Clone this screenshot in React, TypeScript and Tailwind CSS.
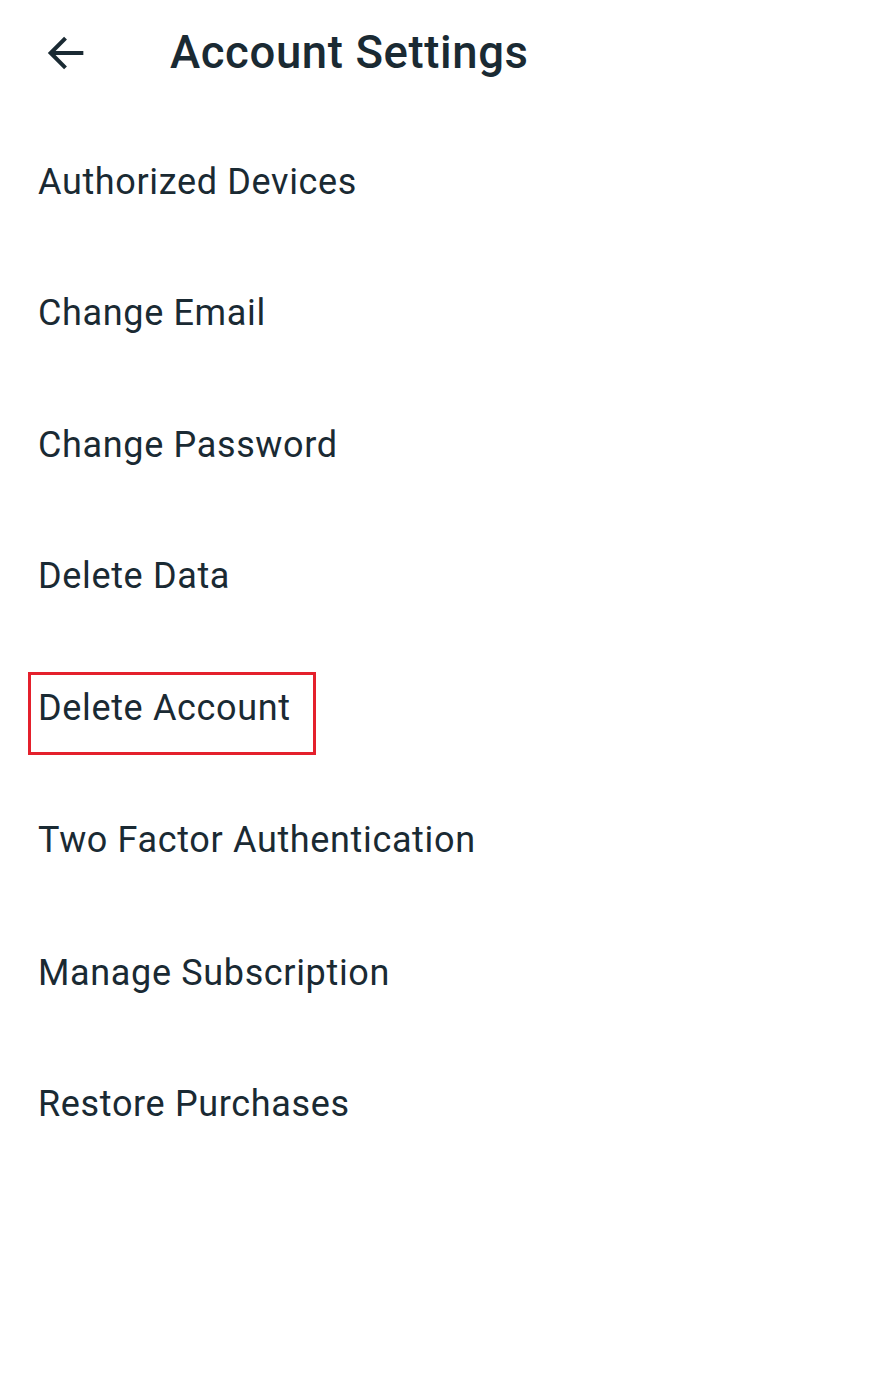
import React from "react";

const items = [
  "Authorized Devices",
  "Change Email",
  "Change Password",
  "Delete Data",
  "Delete Account",
  "Two Factor Authentication",
  "Manage Subscription",
  "Restore Purchases",
];

export default function App() {
  return (
    <div className="w-[896px] h-[1377px] bg-white text-[#1a2a33]" style={{ fontFamily: "Roboto, 'Noto Sans', sans-serif" }}>
      <div className="flex items-center h-[106px]">
        <div className="w-[170px] pl-[43px] flex items-center">
          <svg width="46" height="46" viewBox="0 0 24 24" fill="none" stroke="#1a2a33" strokeWidth="2.1" strokeLinecap="square">
            <path d="M20 12H5" />
            <path d="M11 5l-7 7 7 7" />
          </svg>
        </div>
        <h1 className="text-[45.5px] font-medium leading-none tracking-[0.6px]">Account Settings</h1>
      </div>
      <div className="flex flex-col pt-[10px]">
        {items.map((t) => (
          <div
            key={t}
            className={
              t === "Two Factor Authentication"
                ? "h-[133.5px] flex items-center pl-[38px]"
                : "h-[131.5px] flex items-center pl-[38px]"
            }
          >
            {t === "Delete Account" ? (
              <div className="border-[3px] border-[#e4202c] -ml-[10px] mt-[12px] pl-[7px] w-[288px] h-[83px] flex items-start pt-[15px]">
                <span className="text-[36px] leading-none tracking-[0.65px]">{t}</span>
              </div>
            ) : (
              <span className="text-[36px] leading-none tracking-[0.65px]">{t}</span>
            )}
          </div>
        ))}
      </div>
    </div>
  );
}
